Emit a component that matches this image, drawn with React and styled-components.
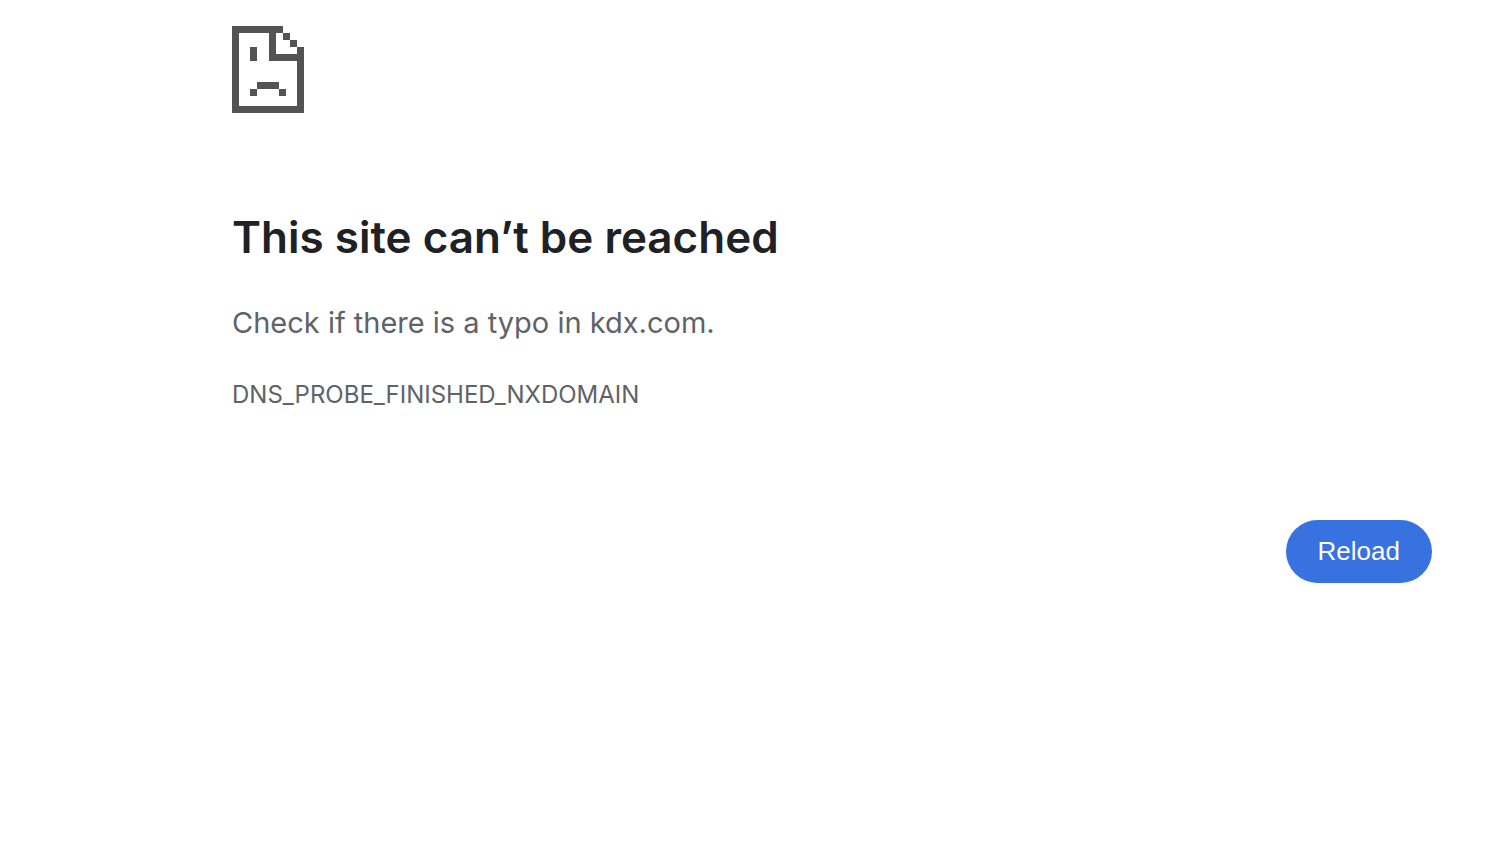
import React from "react";
import styled, { createGlobalStyle } from "styled-components";

const GlobalStyle = createGlobalStyle`
  body {
    margin: 0;
    background: #ffffff;
    color: #5f6368;
    font-family: Inter, "Liberation Sans", sans-serif;
  }
`;

const Page = styled.main`
  display: flex;
  flex-direction: column;
  padding: 26px 58px 26px 232px;
`;

const SadPageIcon = styled.svg`
  display: block;
  width: 72px;
  height: 87px;
  fill: #535353;
`;

const Title = styled.h1`
  margin: 94px 0 0;
  color: #202124;
  font-size: 44px;
  font-weight: 600;
  line-height: 60px;
`;

const Summary = styled.p`
  margin: 32px 0 0;
  font-size: 29px;
  line-height: 48px;
`;

const ErrorCode = styled.p`
  margin: 30px 0 0;
  font-size: 24px;
  line-height: 36px;
`;

const Actions = styled.div`
  display: flex;
  justify-content: flex-end;
  margin-top: 107px;
`;

const ReloadButton = styled.button`
  padding: 16px 32px;
  border: 0;
  border-radius: 32px;
  background: #3871e0;
  color: #ffffff;
  font-family: "Liberation Sans", Arial, sans-serif;
  font-size: 26px;
  line-height: 31px;
  cursor: pointer;
`;

export default function App() {
  return (
    <>
      <GlobalStyle />
      <Page>
        <SadPageIcon viewBox="0 0 72 87" shapeRendering="crispEdges" aria-hidden="true">
          <path d="M0 0H51V7H44V28H65V21H72V87H0ZM7 7V80H65V35H37V7Z" fillRule="evenodd" />
          <path d="M51 7h7v7h-7zM58 14h7v7h-7z" />
          <path d="M18 21h7v14h-7zM25 56h22v7h-22zM18 63h7v7h-7zM47 63h7v7h-7z" />
        </SadPageIcon>
        <Title>This site can’t be reached</Title>
        <Summary>Check if there is a typo in kdx.com.</Summary>
        <ErrorCode>DNS_PROBE_FINISHED_NXDOMAIN</ErrorCode>
        <Actions>
          <ReloadButton type="button">Reload</ReloadButton>
        </Actions>
      </Page>
    </>
  );
}
